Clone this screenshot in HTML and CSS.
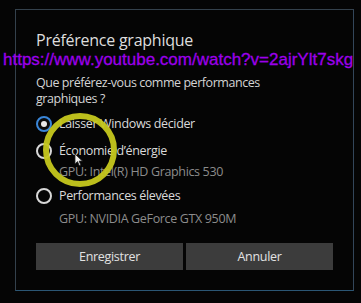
FILE: index.html
```html
<!DOCTYPE html>
<html lang="fr">
<head>
<meta charset="utf-8">
<link rel="stylesheet" href="styles.css">
</head>
<body>
<div class="dialog">
  <h1 class="title">Préférence graphique</h1>
  <p class="question">Que préférez-vous comme performances<br>graphiques ?</p>
  <div class="options">
    <div class="option">
      <span class="radio checked"></span>
      <span class="label">Laisser Windows décider</span>
    </div>
    <div class="option">
      <span class="radio"></span>
      <span class="label">Économie d’énergie</span>
    </div>
    <div class="gpu">GPU: Intel(R) HD Graphics 530</div>
    <div class="option">
      <span class="radio"></span>
      <span class="label">Performances élevées</span>
    </div>
    <div class="gpu last">GPU: NVIDIA GeForce GTX 950M</div>
  </div>
  <div class="buttons">
    <button class="btn">Enregistrer</button>
    <button class="btn">Annuler</button>
  </div>
</div>
<div class="url">https://www.youtube.com/watch?v=2ajrYlt7skg</div>
<div class="highlight"></div>
<svg class="cursor" width="10" height="14" viewBox="0 0 10 14"><path d="M1 1 L1 11 L3.5 8.6 L5.3 12.6 L6.8 12 L5.1 8.1 L8.4 8.1 Z" fill="#f2f2f2" stroke="#222" stroke-width="0.8"/></svg>
</body>
</html>
```
FILE: styles.css
```css
html, body {
  margin: 0;
  padding: 0;
  background: #050505;
  width: 361px;
  height: 303px;
  overflow: hidden;
  font-family: "Open Sans", "Noto Sans", sans-serif;
}
.dialog {
  box-sizing: border-box;
  margin: 9px 0 0 15px;
  width: 339px;
  height: 282px;
  border: 1px solid #34414c;
  border-bottom-color: #2b5674;
  border-right-color: #33465a;
  padding: 20px 20px 0 20px;
  display: flex;
  flex-direction: column;
}
.title {
  margin: 0;
  font-weight: 400;
  font-size: 16px;
  line-height: 20px;
  color: #dedede;
  letter-spacing: -0.25px;
}
.question {
  margin: 25px 0 0 0;
  font-size: 12.5px;
  line-height: 16px;
  color: #d4d4d4;
  letter-spacing: -0.45px;
}
.options {
  margin-top: 3px;
  display: flex;
  flex-direction: column;
}
.option {
  display: flex;
  align-items: center;
  height: 27px;
  gap: 7px;
}
.radio {
  box-sizing: border-box;
  width: 16px;
  height: 16px;
  border-radius: 50%;
  border: 2px solid #d8d8d8;
  margin-left: 0;
  flex: none;
  position: relative;
}
.radio.checked {
  border-color: #3a86d8;
  background: #0a0a0a;
}
.radio.checked::after {
  content: "";
  position: absolute;
  left: 3px;
  top: 3px;
  width: 6px;
  height: 6px;
  border-radius: 50%;
  background: #e8e8e8;
}
.label {
  font-size: 12.5px;
  color: #dadada;
  letter-spacing: -0.35px;
}
.gpu {
  padding-left: 23px;
  font-size: 12.5px;
  line-height: 16px;
  height: 18px;
  color: #8c8c8c;
  letter-spacing: -0.35px;
}
.gpu.last {
  margin-top: 2px;
}
.buttons {
  margin-top: 14px;
  display: flex;
  gap: 3px;
}
.btn {
  flex: 1;
  height: 27px;
  border: none;
  background: #3c3c3c;
  color: #e2e2e2;
  font-family: "Open Sans", "Noto Sans", sans-serif;
  font-size: 12.5px;
  letter-spacing: -0.3px;
  padding: 0;
}
.url {
  position: absolute;
  left: 3px;
  top: 50px;
  font-family: "Liberation Sans", Arial, sans-serif;
  font-size: 17px;
  line-height: 19px;
  color: #9c00ea;
  -webkit-text-stroke: 0.3px #9c00ea;
  white-space: nowrap;
}
.highlight {
  position: absolute;
  left: 43px;
  top: 113px;
  width: 62px;
  height: 62px;
  border: 6px solid #c6c81e;
  border-radius: 50%;
  opacity: 0.95;
}
.cursor {
  position: absolute;
  left: 74px;
  top: 153px;
}
```
